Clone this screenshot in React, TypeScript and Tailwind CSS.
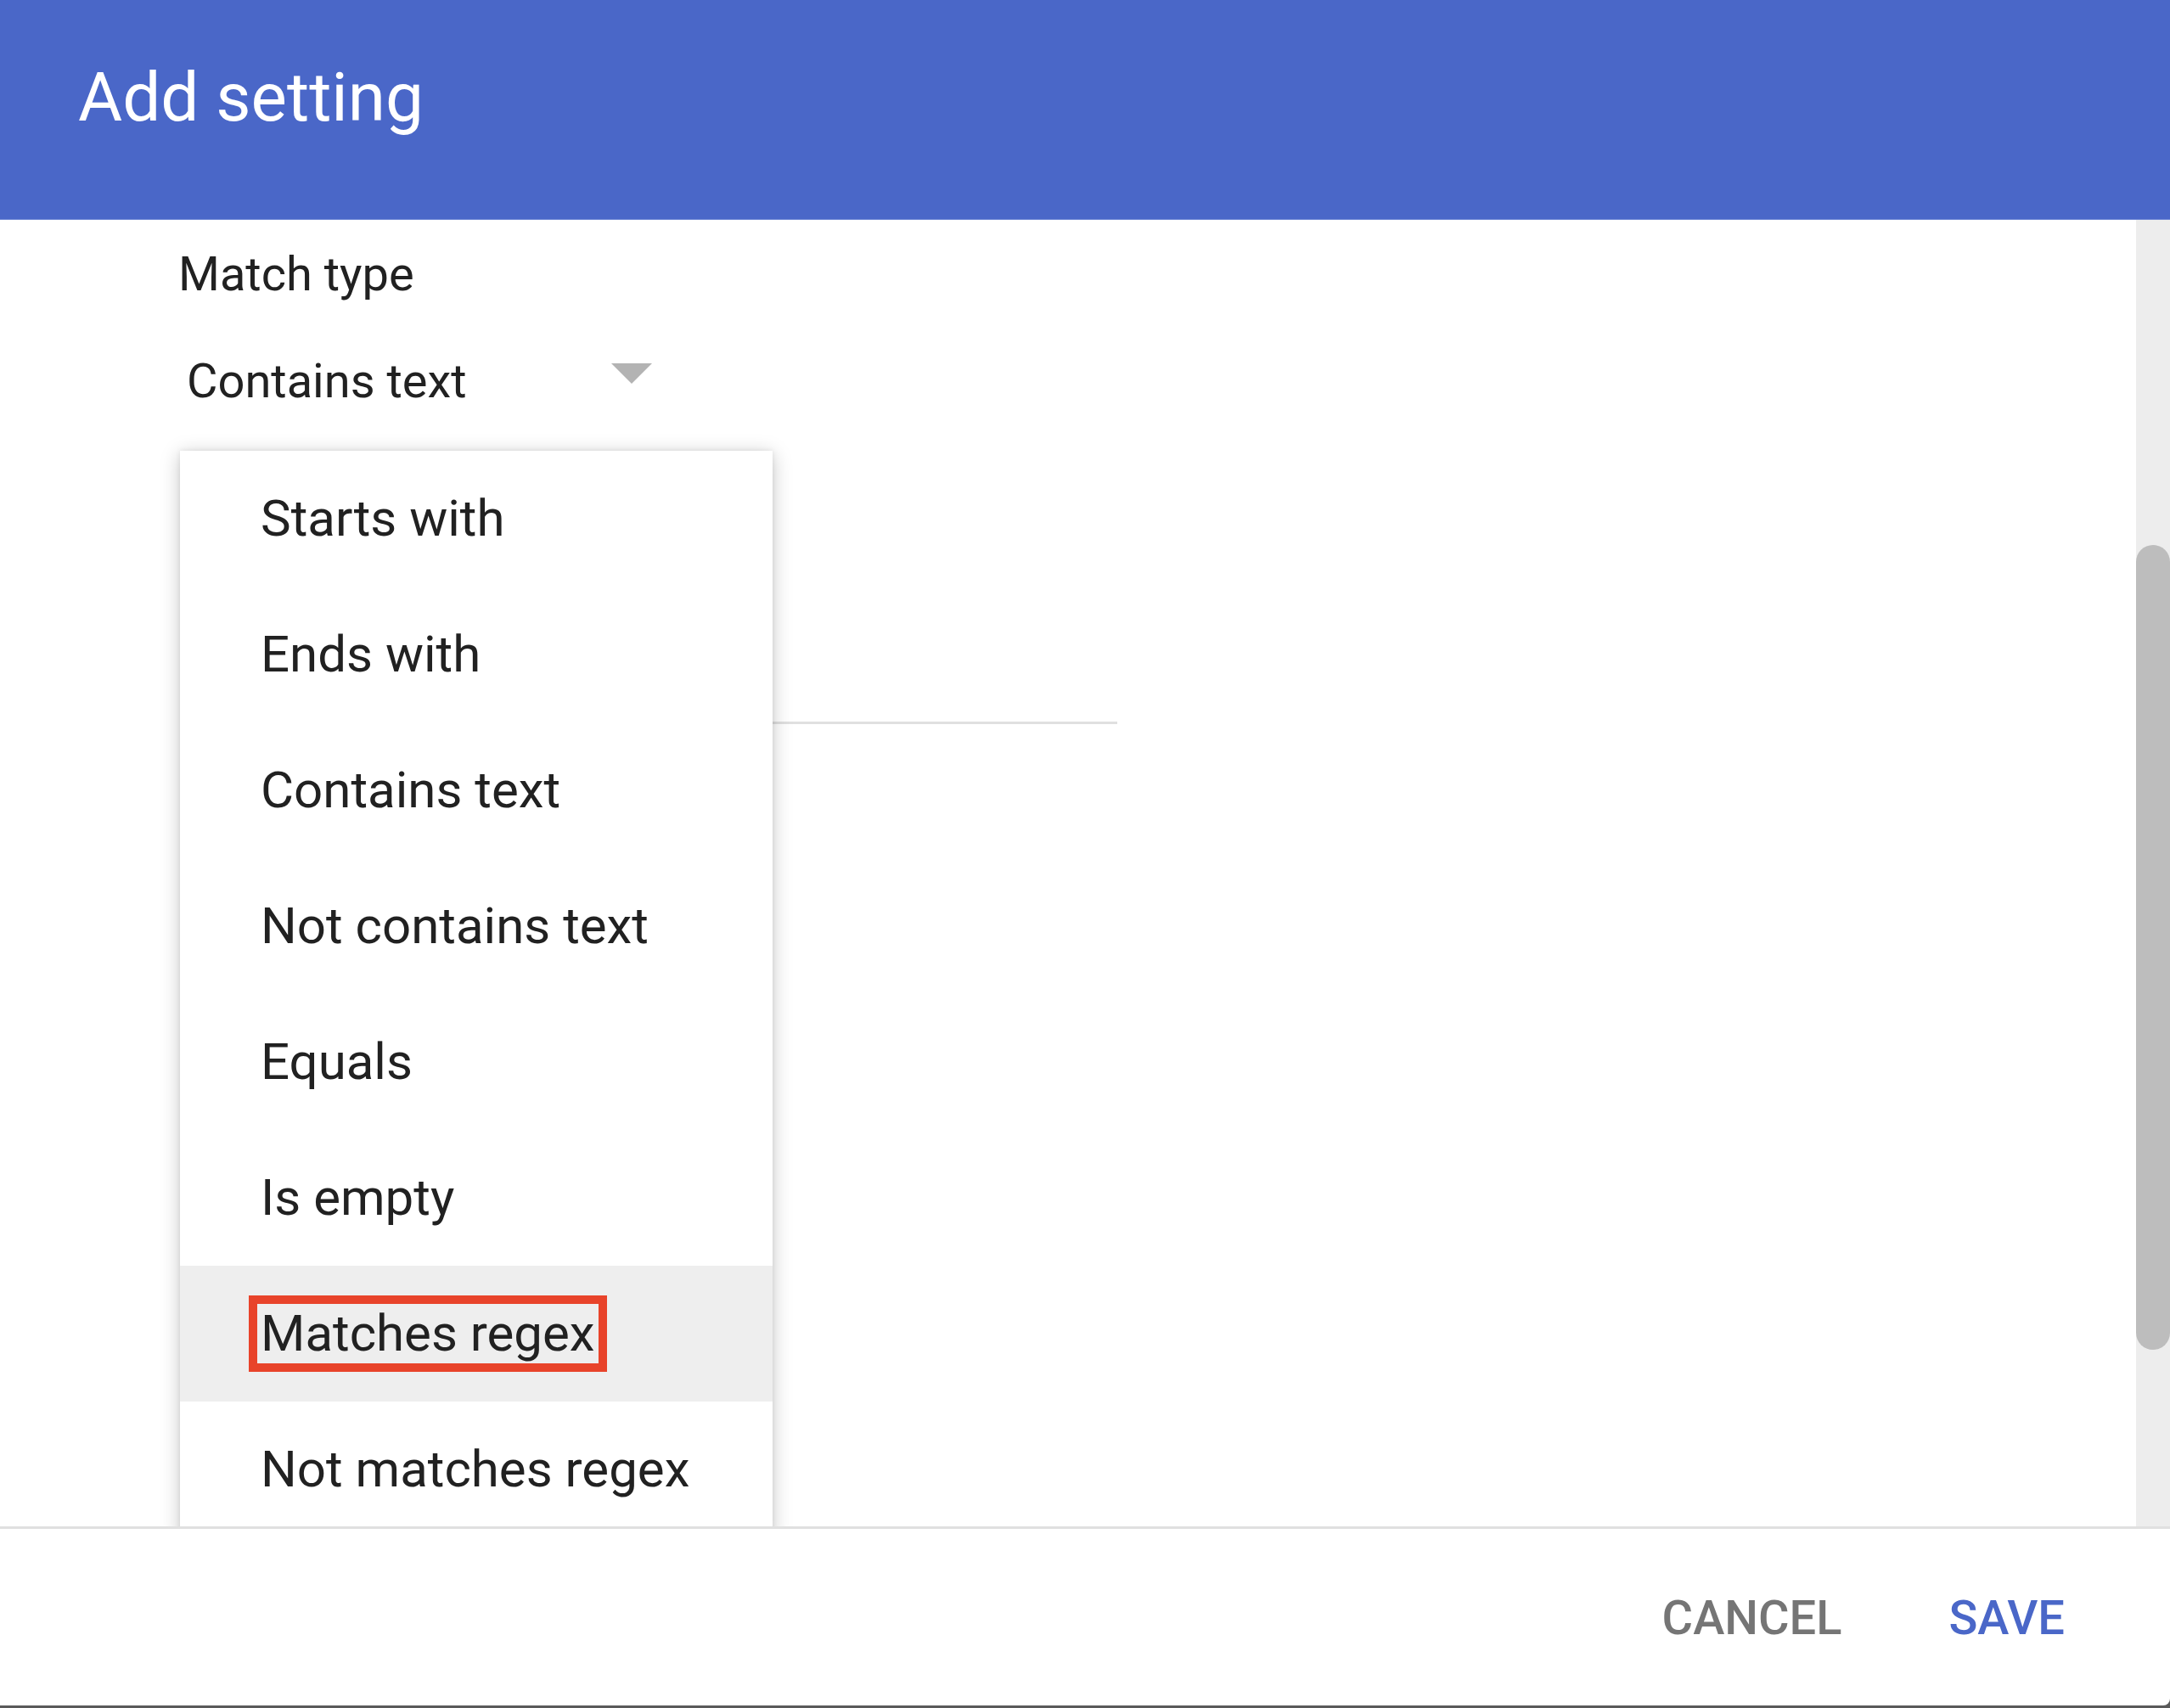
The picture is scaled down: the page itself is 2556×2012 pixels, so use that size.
import React from "react";

const options = [
  "Starts with",
  "Ends with",
  "Contains text",
  "Not contains text",
  "Equals",
  "Is empty",
  "Matches regex",
  "Not matches regex",
];

const selected = "Matches regex";

const App = () => {
  return (
    <div className="w-[2556px] h-[2012px] bg-[#5a5a5a] overflow-hidden font-['Roboto',sans-serif]">
      <div className="flex flex-col h-[2009px] bg-white rounded-br-[8px] overflow-hidden">
        {/* Header */}
        <div className="h-[259px] shrink-0 bg-[#4a67c8] pl-[92px] pt-[75px] border-b-[1px] border-[#6d86d4]">
          <h1 className="text-[80px] leading-none text-white font-normal">Add setting</h1>
        </div>

        {/* Body */}
        <div className="flex-1 flex min-h-0">
          <div className="flex-1 relative overflow-hidden">
            <div className="pl-[210px] pt-[36px]">
              <div className="text-[56px] leading-none text-[#212121]">Match type</div>
              <div className="mt-[70px] w-[560px] flex justify-between items-start">
                <span className="pl-[10px] text-[56px] leading-none text-[#212121]">Contains text</span>
                <svg width="48" height="24" viewBox="0 0 48 24" className="mt-[7px] mr-[2px]">
                  <path d="M0 0 H48 L24 24 Z" fill="#b3b3b3" />
                </svg>
              </div>
              {/* underline of the field hidden behind the menu */}
              <div className="ml-[2px] mt-[373px] w-[1104px] h-[3px] bg-[#e0e0e0]"></div>
            </div>

            {/* Dropdown menu */}
            <div className="absolute left-[212px] top-[272px] w-[698px] bg-white shadow-[0_4px_22px_rgba(0,0,0,0.22),0_0_6px_rgba(0,0,0,0.08)]">
              {options.map((opt) => (
                <div
                  key={opt}
                  className={
                    opt === selected
                      ? "relative h-[160px] flex items-center pl-[95px] bg-[#eeeeee]"
                      : "relative h-[160px] flex items-center pl-[95px]"
                  }
                >
                  <span className="text-[60px] leading-none text-[#212121]">{opt}</span>
                  {opt === selected && (
                    <div className="absolute left-[81px] top-[35px] w-[422px] h-[90px] border-[10px] border-[#e8432a]"></div>
                  )}
                </div>
              ))}
            </div>
          </div>

          {/* Scrollbar */}
          <div className="w-[40px] shrink-0 bg-[#ededed] pt-[383px]">
            <div className="h-[948px] rounded-full bg-[#bdbdbd]"></div>
          </div>
        </div>

        {/* Footer */}
        <div className="h-[211px] shrink-0 border-t-[3px] border-[#e0e0e0] flex justify-end items-start gap-[126px] pr-[124px] pt-[77px]">
          <button className="text-[56px] leading-none font-medium text-[#757575]">CANCEL</button>
          <button className="text-[56px] leading-none font-medium text-[#4a67c8]">SAVE</button>
        </div>
      </div>
    </div>
  );
};

export default App;
